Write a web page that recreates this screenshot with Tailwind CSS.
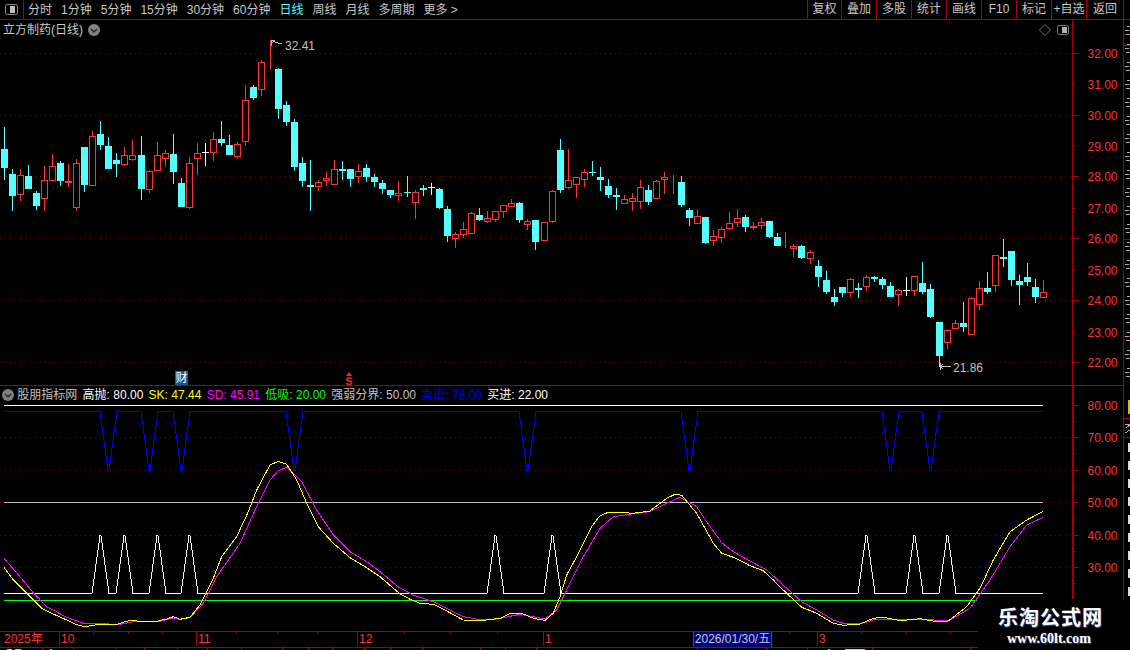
<!DOCTYPE html>
<html lang="zh">
<head>
  <meta charset="UTF-8" />
  <title>立方制药 日线</title>
  <script src="https://cdn.jsdelivr.net/npm/@tailwindcss/browser@4"></script>
</head>
<body class="bg-black">

<div class="relative w-[1130px] h-[650px] overflow-hidden bg-black text-[12px] leading-none text-[#c8c8c8] font-['Liberation_Sans','Noto_Sans_CJK_SC',sans-serif]">

  <!-- charts: drawn by the script below, in page coordinates -->
  <svg id="chart" class="absolute top-0 left-0 w-[1130px] h-[650px]" viewBox="0 0 1130 650"></svg>

  <!-- Toolbar -->
  <header class="relative h-[20px] flex items-center border-b border-[#a80000]">
    <div class="w-[24px] h-[19px] flex items-center justify-center border-r border-[#a80000]">
      <svg width="13" height="11" viewBox="0 0 13 11"><rect x="0.5" y="0.5" width="12" height="10" rx="2" fill="none" stroke="#8c8c8c"/><rect x="5" y="2" width="5" height="7" fill="#c0c0c0"/></svg>
    </div>
    <nav class="flex items-center gap-[9px] pl-[4px]">
      <span>分时</span><span>1分钟</span><span>5分钟</span><span>15分钟</span><span>30分钟</span><span>60分钟</span>
      <span class="text-[#54ffff]">日线</span><span>周线</span><span>月线</span><span>多周期</span><span>更多 &gt;</span>
    </nav>
    <div class="absolute left-[807px] top-0 h-[19px] flex text-center border-l border-[#a80000]">
      <span class="w-[34px] leading-[19px] border-r border-[#a80000]">复权</span>
      <span class="w-[35px] leading-[19px] border-r border-[#a80000]">叠加</span>
      <span class="w-[35px] leading-[19px] border-r border-[#a80000]">多股</span>
      <span class="w-[35px] leading-[19px] border-r border-[#a80000]">统计</span>
      <span class="w-[35px] leading-[19px] border-r border-[#a80000]">画线</span>
      <span class="w-[35px] leading-[19px] border-r border-[#a80000]">F10</span>
      <span class="w-[35px] leading-[19px] border-r border-[#a80000]">标记</span>
      <span class="w-[35px] leading-[19px] border-r border-[#a80000]">+自选</span>
      <span class="w-[37px] leading-[19px] border-r border-[#a80000]">返回</span>
    </div>
  </header>

  <!-- Price pane -->
  <section class="relative w-[1124px] h-[366px] border-b border-[#a80000]">
    <div class="flex items-center h-[19px] pl-[3px] gap-[5px]">
      <span>立方制药(日线)</span>
      <svg width="12" height="12" viewBox="0 0 12 12"><circle cx="6" cy="6" r="6" fill="#808080"/><path d="M3 5 L6 8 L9 5" fill="none" stroke="#262626" stroke-width="1.5"/></svg>
    </div>
    <svg class="absolute left-[1039px] top-[4px]" width="12" height="12" viewBox="0 0 12 12"><path d="M6 .5 L11.5 6 L6 11.5 L.5 6 Z" fill="none" stroke="#707070"/></svg>
    <svg class="absolute left-[1057px] top-[5px]" width="12" height="10" viewBox="0 0 12 10"><rect x="0.5" y="0.5" width="11" height="9" rx="2" fill="none" stroke="#808080"/><rect x="5" y="2" width="5" height="6" fill="#b0b0b0"/></svg>
    <span class="absolute left-[285px] top-[20px] text-[#c0c0c0]">32.41</span>
    <span class="absolute left-[953px] top-[342px] text-[#c0c0c0]">21.86</span>
    <span class="absolute left-[175px] top-[351px] w-[13px] h-[14px] leading-[14px] text-center bg-[#1a5a96] text-white">财</span>
    <div class="absolute left-[345px] top-[352px] w-[8px] flex flex-col items-center">
      <svg width="6" height="4" viewBox="0 0 6 4"><path d="M3 0 L6 4 H0 Z" fill="#ff2020"/></svg>
      <span class="mt-[1px] text-[11px] leading-[9px] font-bold text-[#ff2020]">S</span>
    </div>
  </section>

  <!-- Indicator pane -->
  <section class="relative w-[1124px] h-[245px]">
    <div class="flex items-center gap-[5.3px] h-[17px] pl-[2px]">
      <svg class="mr-[-2px]" width="12" height="12" viewBox="0 0 12 12"><circle cx="6" cy="6" r="6" fill="#808080"/><path d="M3 5 L6 8 L9 5" fill="none" stroke="#262626" stroke-width="1.5"/></svg>
      <span class="text-[#c0c0c0]">股朋指标网</span>
      <span class="text-white">高抛: 80.00</span>
      <span class="text-[#ffff00]">SK: 47.44</span>
      <span class="text-[#ff00ff]">SD: 45.91</span>
      <span class="text-[#00ff00]">低吸: 20.00</span>
      <span class="text-[#c0c0c0]">强弱分界: 50.00</span>
      <span class="text-[#0000e0]">卖出: 78.00</span>
      <span class="text-white">买进: 22.00</span>
    </div>
  </section>

  <!-- Time axis -->
  <footer class="relative w-[978px] h-[17px] border-y border-[#a80000] text-[#ff3232] leading-[15px]">
    <span class="absolute left-[4px] top-0">2025年</span>
    <span class="absolute left-[61px] top-0">10</span>
    <span class="absolute left-[198px] top-0">11</span>
    <span class="absolute left-[359px] top-0">12</span>
    <span class="absolute left-[545px] top-0">1</span>
    <span class="absolute left-[819px] top-0">3</span>
    <span class="absolute left-[693px] top-0 w-[79px] h-[15px] text-center bg-[#000080] border-x border-[#4040c0] text-[#c8c8c8]">2026/01/30/五</span>
  </footer>

  <!-- Watermark -->
  <div class="absolute left-[978px] top-[599px] w-[152px] h-[51px] bg-black flex flex-col items-center pt-[7px] pr-[7px]">
    <span class="text-[20px] leading-[24px] tracking-[1px] font-bold text-white [text-shadow:1px_1px_1px_#3a4a80]">乐淘公式网</span>
    <span class="mt-[1px] mr-[3px] text-[14px] leading-[16px] font-bold text-white font-['Liberation_Serif',serif] [text-shadow:1px_1px_1px_#3a4a80]">www.60lt.com</span>
  </div>
</div>

<script>
  const RED = '#ff3232', CYAN = '#54ffff', DARK = '#a80000', DOT = '#800000';

  // candles as read off the chart: type, wick top, body top, body bottom, wick bottom
  const parts = [
    [100, [
      ['c',82,148,204,240],['c',208,222,288,333],['r',208,226,284,303],['c',195,228,267,267],['c',273,279,318,330],
      ['r',198,241,296,333],['r',162,199,242,243],['c',183,189,243,258],['r',192,243,249,261],['r',178,190,323,333],
      ['c',141,141,255,276],['r',94,109,257,258],['c',63,102,135,150],['c',111,138,207,207],['c',159,180,192,231],
      ['r',141,166,194,198],['r',120,166,179,183],['c',108,165,267,300],['r',210,214,269,279],['r',126,166,212,212],
      ['r',150,160,176,201],['c',102,162,216,252],['c',234,249,321,321],['r',171,190,323,327],['r',129,160,176,225],
      ['w',129,157,157,198],['r',96,118,158,183],['c',63,117,129,138],['c',105,135,165,165],['r',126,133,170,177],
    ]],
    [30, [
      ['r',165,210,335,347],['c',165,171,204,210],['r',90,96,179,198],['r',30,100,100,120],['c',114,117,237,267],
      ['c',213,225,276,288],['c',267,276,411,423],['c',381,399,453,471],['c',390,465,471,543],['r',450,457,470,483],
      ['r',426,444,453,468],['r',390,418,464,465],['c',393,417,423,450],
    ]],
    [130, [
      ['c',117,117,147,171],['r',102,124,140,159],['c',102,114,141,156],['c',132,141,156,171],['c',150,159,177,192],
      ['c',180,180,195,204],['r',153,190,197,213],['c',138,186,189,201],['r',180,187,218,267],['c',165,174,180,198],
      ['w',159,171,171,195],['c',174,177,234,237],['c',228,237,318,336],['r',306,313,326,354],['r',276,298,314,324],
      ['r',246,250,311,312],['c',234,255,270,273],['r',243,265,275,279],['r',244,244,269,276],['r',226,226,245,264],
      ['r',207,220,231,231],['c',216,219,270,279],['r',267,274,284,300],['c',270,270,336,360],['r',277,277,332,334],
      ['r',180,184,275,279],['c',27,60,180,189],['r',57,151,173,177],['r',141,142,164,204],['r',117,127,149,171],
      ['c',93,126,129,138],['c',111,141,150,183],['c',147,168,195,204],['c',174,195,201,240],['r',195,208,221,222],
      ['r',189,205,215,243],['r',150,172,215,237],['c',165,180,216,225],['r',150,154,206,207],['r',126,142,151,192],
      ['r',135,148,148,192],['c',138,156,225,231],['c',234,240,264,288],['r',237,259,281,282],['c',261,261,339,342],
      ['r',300,319,334,348],['r',291,298,323,339],['r',246,280,298,300],['r',237,265,278,291],['c',255,261,291,306],
    ]],
    [200, [
      ['r',66,78,84,90],['r',54,67,79,87],['c',63,63,111,114],['c',99,111,138,138],['r',96,136,136,144],
      ['r',132,139,146,171],['c',135,138,174,177],['r',150,157,176,192],['c',180,198,231,261],['c',213,240,276,282],
      ['c',267,291,306,318],['c',261,261,279,291],['r',234,238,278,291],['c',249,264,270,294],['r',225,232,260,273],
      ['c',228,231,237,246],['c',231,237,255,267],['c',246,258,291,291],['r',267,271,284,318],['w',231,270,270,288],
      ['r',228,229,272,288],['c',186,249,276,282],['c',252,267,351,354],['c',366,366,468,500],['r',391,391,428,447],
      ['r',360,370,386,387],['c',306,369,381,396],['r',291,295,404,405],['r',243,265,314,330],['c',216,264,276,282],
      ['r',166,166,257,276],['c',117,171,177,201],['c',153,153,240,258],['c',225,243,255,315],['c',189,231,246,258],
      ['c',237,261,291,309],['r',240,277,293,293],
    ]],
  ];

  const jumps = [17, 33, 50, 67, 83, 100, 116];
  const centerX = i => 4 + 8 * i + jumps.filter(j => i >= j).length;

  let svg = '';
  const line = (x1, y1, x2, y2, color, extra = '') =>
    `<line x1="${x1}" y1="${y1}" x2="${x2}" y2="${y2}" stroke="${color}" shape-rendering="crispEdges" ${extra}/>`;
  const dotted = y => line(0, y + .5, 1072, y + .5, DOT, 'stroke-dasharray="1 4"');

  // grid
  [53, 115, 176, 238, 300, 362, 437, 470, 502, 535, 567].forEach(y => { svg += dotted(y); });

  // candles
  let idx = 0;
  parts.forEach(([y0, list]) => {
    list.forEach(([t, wt, bt, bb, wb]) => {
      const cx = centerX(idx++);
      const Y = v => Math.round(y0 + v / 3);
      const color = t === 'c' ? CYAN : t === 'r' ? RED : '#ffffff';
      svg += `<rect x="${cx}" y="${Y(wt)}" width="1" height="${Y(wb) - Y(wt)}" fill="${color}"/>`;
      if (t === 'c') {
        svg += `<rect x="${cx - 3}" y="${Y(bt)}" width="7" height="${Math.max(Y(bb) - Y(bt), 1)}" fill="${CYAN}"/>`;
      } else if (t === 'r') {
        svg += `<rect x="${cx - 2.5}" y="${Y(bt) + .5}" width="6" height="${Math.max(Y(bb) - Y(bt) - 1, 0)}" fill="#000" stroke="${RED}" shape-rendering="crispEdges"/>`;
      } else {
        svg += `<rect x="${cx - 3}" y="${Y(bt)}" width="7" height="1" fill="#fff"/>`;
      }
    });
  });

  // high / low markers
  svg += `<path d="M271 46V40.5H275M271 43L274 41.5L278 43L282 44" fill="none" stroke="#c0c0c0" shape-rendering="crispEdges"/>`;
  svg += `<path d="M940 363V370M940.5 366.5H951M940.5 366.5L943 364M940.5 366.5L943 369" fill="none" stroke="#c0c0c0" shape-rendering="crispEdges"/>`;

  // indicator levels
  svg += line(4, 405.5, 1043, 405.5, '#ffffff');
  svg += line(4, 502.5, 1043, 502.5, '#c0c0c0');
  svg += line(4, 600.5, 977, 600.5, '#00ff00');

  const spikes = (peaks, base, tip) => {
    let pts = [[4, base]];
    peaks.forEach(x => { pts.push([x - 8, base], [x, tip], [x + 1, tip], [x + 9, base]); });
    pts.push([1043, base]);
    return pts.map(p => `${p[0]},${p[1] + .5}`).join(' ');
  };
  svg += `<polyline points="${spikes([108, 149, 181, 294, 527, 689, 890, 930], 411, 470)}" fill="none" stroke="#0000ff" shape-rendering="crispEdges"/>`;
  svg += `<polyline points="${spikes([100, 124, 157, 189, 495, 552, 866, 914, 947], 593, 535)}" fill="none" stroke="#ffffff" shape-rendering="crispEdges"/>`;

  // SK / SD curves, read from the three crops (x offset, then crop x,y at 3x)
  const curve = (segs, color) => {
    const pts = [];
    segs.forEach(([x0, p]) => p.forEach(([x, y]) => pts.push(`${(x0 + x / 3).toFixed(1)},${(400 + y / 3).toFixed(1)}`)));
    return `<polyline points="${pts.join(' ')}" fill="none" stroke="${color}" shape-rendering="crispEdges"/>`;
  };
  svg += curve([
    [0, [[12,475],[60,530],[100,578],[140,620],[200,652],[250,670],[360,673],[400,665],[470,666],[520,654],[540,658],[570,653],[610,610],[650,530],[720,430],[770,320],[810,240],[835,212],[860,202],[905,245],[950,330],[1000,405],[1050,455],[1100,485],[1140,515],[1198,563]]],
    [400, [[40,585],[100,605],[190,650],[240,659],[290,657],[360,643],[400,650],[435,657],[470,630],[500,570],[550,470],[600,385],[640,350],[700,341],[750,335],[800,310],[840,292],[890,320],[920,365],[965,428],[1000,455],[1050,483]]],
    [750, [[50,510],[110,565],[155,605],[200,630],[250,660],[280,670],[330,672],[380,657],[450,660],[510,657],[595,663],[660,625],[720,540],[780,440],[830,375],[880,352]]],
  ], '#ff00ff');
  svg += curve([
    [0, [[12,502],[40,540],[70,570],[100,600],[125,625],[160,642],[200,660],[230,674],[255,680],[285,675],[350,673],[390,661],[430,665],[470,664],[500,657],[520,650],[540,658],[570,652],[600,615],[640,535],[665,470],[710,410],[745,335],[770,270],[810,195],[835,184],[860,193],[890,240],[920,310],[955,380],[1000,430],[1050,473],[1100,503],[1140,530],[1198,580]]],
    [400, [[30,598],[60,610],[100,613],[140,633],[190,660],[250,661],[300,655],[330,641],[365,640],[400,655],[435,661],[460,640],[480,590],[500,525],[530,470],[575,380],[600,347],[625,337],[660,337],[700,340],[750,333],[800,295],[825,283],[845,286],[890,340],[940,430],[965,460],[1000,472],[1050,497]]],
    [750, [[40,512],[70,540],[100,570],[155,622],[200,640],[250,670],[280,676],[330,672],[370,655],[400,652],[450,662],[510,656],[560,665],[595,663],[650,620],[690,565],[730,480],[780,395],[830,360],[880,334]]],
  ], '#ffff00');

  // axes
  svg += `<rect x="1072" y="20" width="1" height="366" fill="${DARK}"/><rect x="1072" y="386" width="2" height="214" fill="${DARK}"/>`;
  svg += `<rect x="1123" y="20" width="1" height="580" fill="${DARK}"/>`;
  const axisLabel = (y, txt) => `<text x="1087.5" y="${y + 4.5}" fill="${RED}" font-size="12" class="font-['Liberation_Sans',sans-serif]">${txt}</text>`;
  [[53,'32.00',1],[84,'31.00',0],[115,'30.00',1],[146,'29.00',0],[176,'28.00',1],[208,'27.00',0],[238,'26.00',1],[270,'25.00',0],[300,'24.00',1],[332,'23.00',0],[362,'22.00',1]]
    .forEach(([y, t, long]) => {
      svg += `<rect x="1073" y="${y}" width="${long ? 6 : 3}" height="1" fill="${DARK}"/>` + axisLabel(y, t);
    });
  [[405,'80.00'],[437,'70.00'],[470,'60.00'],[502,'50.00'],[535,'40.00'],[567,'30.00']].forEach(([y, t]) => {
    svg += `<rect x="1074" y="${y}" width="5" height="1" fill="${DARK}"/>` + axisLabel(y, t);
  });
  [421, 453, 486, 518, 551, 583].forEach(y => { svg += `<rect x="1074" y="${y}" width="2" height="1" fill="${DARK}"/>`; });

  // time axis marks
  [59, 196, 357, 543, 817].forEach(x => { svg += `<rect x="${x}" y="631" width="1" height="15" fill="${DARK}"/>`; });
  [93, 128, 162, 236, 277, 317, 404, 450, 497, 789, 861, 906, 950].forEach(x => { svg += `<rect x="${x}" y="631" width="1" height="3" fill="${DARK}"/>`; });

  // cut-off status bar along the bottom edge
  [42, 73, 115, 144, 177, 207, 241, 282, 308, 332, 364, 390, 422, 480, 505, 536, 697, 766, 807, 872, 970].forEach(x => {
    svg += `<rect x="${x}" y="647" width="1" height="3" fill="${DARK}"/>`;
  });
  [[7, 5], [15, 6], [50, 2], [828, 2]].forEach(([x, w]) => { svg += `<rect x="${x}" y="649" width="${w}" height="1" fill="#c0c0c0"/>`; });
  svg += `<rect x="845" y="649" width="20" height="1" fill="#54ffff"/>`;

  // cut-off side panel right of the axis
  [34, 45, 239, 336, 418, 437].forEach(y => { svg += `<rect x="1124" y="${y}" width="6" height="1" fill="${DARK}"/>`; });
  for (let y = 26; y < 385; y += 18) {
    [0, 4, 8].forEach(d => { svg += `<rect x="${1125 + (y + d) % 3}" y="${y + d}" width="4" height="1" fill="#b0b0b0"/>`; });
  }
  svg += `<rect x="1128" y="400" width="2" height="14" fill="#c8c800"/>`;
  svg += `<path d="M1125 424H1130M1126 428L1130 425M1125 433L1130 430" stroke="#b0b0b0" fill="none" shape-rendering="crispEdges"/>`;
  for (let y = 443; y < 597; y += 18) {
    svg += `<rect x="1128" y="${y}" width="2" height="9" fill="#dcdcdc"/>`;
  }

  document.getElementById('chart').innerHTML = svg;
</script>
</body>
</html>
